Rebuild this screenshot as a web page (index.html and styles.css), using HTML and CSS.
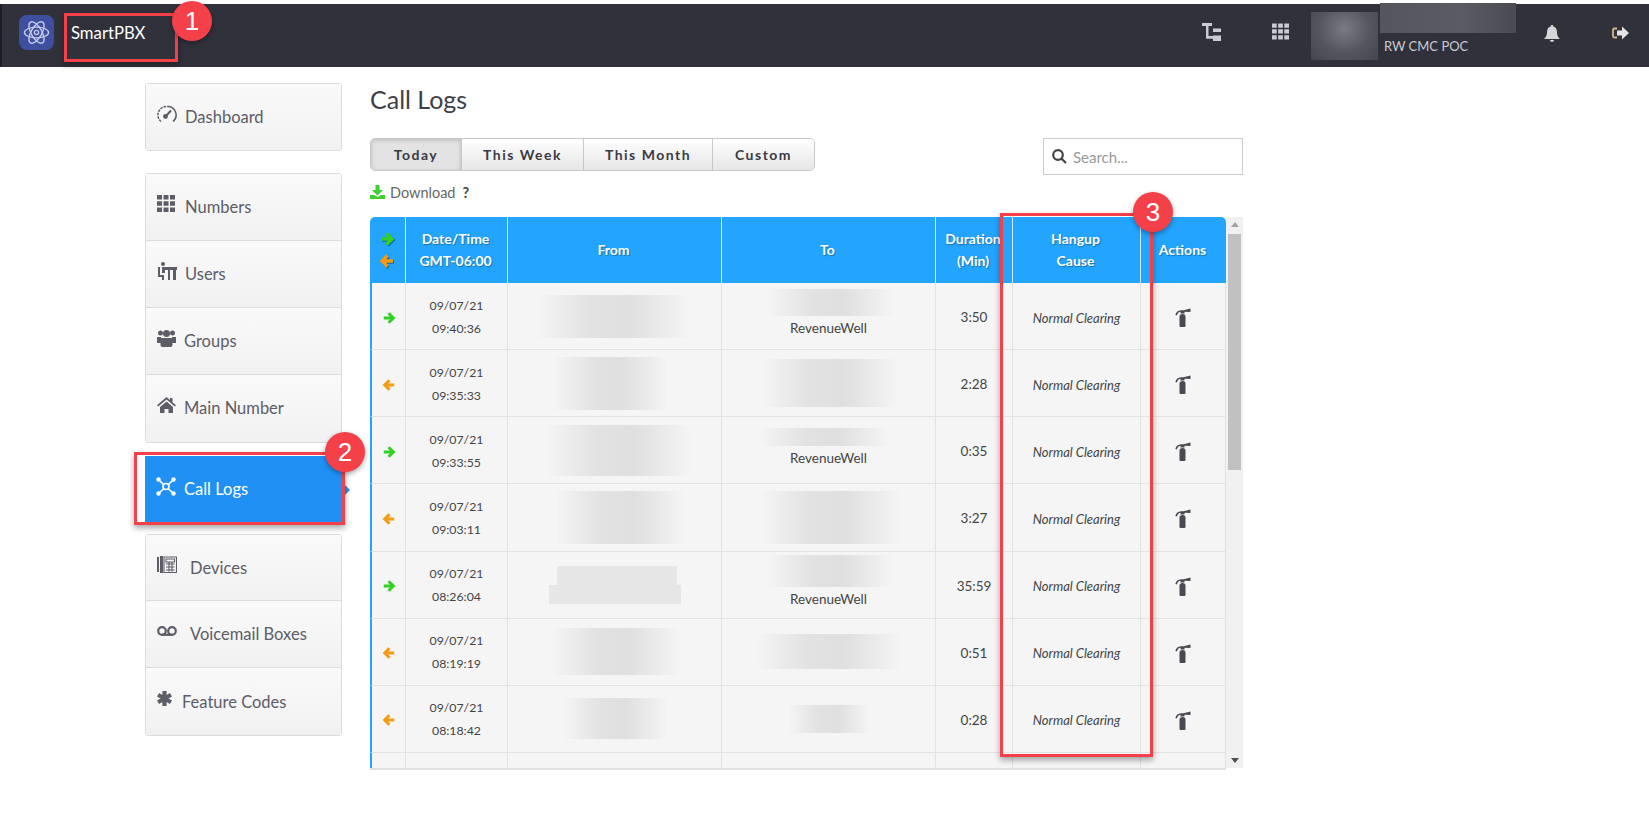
FILE: index.html
```html
<!DOCTYPE html>
<html lang="en">
<head>
    <meta charset="UTF-8">
    <meta name="viewport" content="width=device-width, initial-scale=1.0">
    <title>SmartPBX Call Logs</title>
    <link rel="stylesheet" href="styles.css">
</head>
<body>
    <svg class="defs" width="0" height="0">
        <symbol id="arrow-right" viewBox="0 0 16 16"><path d="M2 8h10M7.500 2.500L13 8l-5.500 5.500" fill="none" stroke="currentColor" stroke-width="3.400"/></symbol>
        <symbol id="arrow-left" viewBox="0 0 16 16"><path d="M14 8H4M8.500 2.500L3 8l5.500 5.500" fill="none" stroke="currentColor" stroke-width="3.400"/></symbol>
        <symbol id="extinguisher" viewBox="0 0 16 19"><path d="M4.500 8.500Q4.500 6 7.500 6Q10.500 6 10.500 8.500V18Q10.500 19 9.500 19H5.500Q4.500 19 4.500 18zM6 2.200h2.500L15.500 0.500V4L9.500 3.800V5.500H5.500V3.800Q3 4 1.800 7.500L0.300 7Q1.500 2.500 6 2.200z" fill="currentColor"/></symbol>
        <symbol id="grid" viewBox="0 0 18 17"><path d="M0 0h5v4.500H0zM6.500 0h5v4.500h-5zM13 0h5v4.500h-5zM0 6.200h5v4.500H0zM6.500 6.200h5v4.500h-5zM13 6.200h5v4.500h-5zM0 12.400h5v4.500H0zM6.500 12.400h5v4.500h-5zM13 12.400h5v4.500h-5z" fill="currentColor"/></symbol>
    </svg>

    <header class="topbar">
        <div class="brand">
            <span class="brand-logo">
                <svg width="27" height="27" viewBox="0 0 28 28" fill="none" stroke="#c6cbe8" stroke-width="1.400">
                    <ellipse cx="14" cy="14" rx="12.500" ry="5.500"/>
                    <ellipse cx="14" cy="14" rx="12.500" ry="5.500" transform="rotate(60 14 14)"/>
                    <ellipse cx="14" cy="14" rx="12.500" ry="5.500" transform="rotate(120 14 14)"/>
                    <circle cx="14" cy="14" r="2.200"/>
                </svg>
            </span>
            <span class="brand-name">SmartPBX</span>
        </div>
        <div class="top-right">
            <svg class="top-icon tree-icon" width="19" height="18" viewBox="0 0 19 18" fill="#c9cbd1"><path d="M0 0h10v3H0zM4 3h2.500v10H12v2.800H4zM11 5.500h8v3.500h-8zM11 12.500h8V18h-8z"/></svg>
            <svg class="top-icon grid-icon" width="17" height="17"><use href="#grid"/></svg>
            <div class="account">
                <div class="blur-avatar"></div>
                <div class="account-info">
                    <div class="blur-name"></div>
                    <div class="account-org">RW CMC POC</div>
                </div>
            </div>
            <svg class="top-icon bell-icon" width="16" height="18" viewBox="0 0 16 18" fill="#d5d6da"><path d="M8 0a1.300 1.300 0 0 1 1.300 1.500C12 2.200 13 4.500 13 7c0 4 1.500 5.500 3 7H0c1.500-1.500 3-3 3-7 0-2.500 1-4.800 3.700-5.500A1.300 1.300 0 0 1 8 0zM6 15h4a2 2 0 0 1-4 0z"/></svg>
            <svg class="top-icon exit-icon" width="17" height="14" viewBox="0 0 17 14"><path d="M5 2.500H2.500Q1 2.500 1 4v6q0 1.500 1.500 1.500H5" fill="none" stroke="#d8b98a" stroke-width="1.800"/><path d="M5 4.500h5V0.500L17 7l-7 6.500V9.500H5z" fill="#e4e4e6"/></svg>
        </div>
    </header>

    <div class="page">
        <nav class="sidebar">
            <div class="nav-group">
                <a class="nav-item">
                    <svg class="nav-icon" width="20" height="18" viewBox="0 0 20 18" fill="none" stroke="currentColor" stroke-width="1.500"><path d="M4 16.500A8.500 8.500 0 0 1 10 1.500" stroke-dasharray="2.500 1"/><path d="M10 1.500A8.500 8.500 0 0 1 16 16.500"/><path d="M8.500 11.500L14 5.500" stroke-width="2"/><circle cx="8.500" cy="11.500" r="1.700" fill="currentColor"/></svg>
                    <span>Dashboard</span>
                </a>
            </div>
            <div class="nav-group">
                <a class="nav-item">
                    <svg class="nav-icon" width="18" height="17"><use href="#grid"/></svg>
                    <span class="nav-label-far">Numbers</span>
                </a>
                <a class="nav-item">
                    <svg class="nav-icon" width="20" height="18" viewBox="0 0 20 18" fill="currentColor"><circle cx="6" cy="2" r="2"/><path d="M1 5h2v8h4v5H5v-3H1zM5 5h15v3h-1v10h-3V8h-3v10h-2V8H8v3H5z"/></svg>
                    <span>Users</span>
                </a>
                <a class="nav-item">
                    <svg class="nav-icon" width="19" height="18" viewBox="0 0 19 18" fill="currentColor"><circle cx="3.500" cy="4" r="2.500"/><circle cx="15.500" cy="4" r="2.500"/><circle cx="9.500" cy="4.500" r="3.500"/><path d="M0 8h4v6H0zM15 8h4v6h-4zM4.500 9h10q1 0 1 1.500V16q0 2-2 2h-8q-2 0-2-2v-5.500Q3.500 9 4.500 9z"/></svg>
                    <span>Groups</span>
                </a>
                <a class="nav-item">
                    <svg class="nav-icon" width="19" height="16" viewBox="0 0 19 16" fill="currentColor"><path d="M9.500 0L13 3V1h2.500v4.200L19 8.300l-1.200 1.200L9.500 2.500 1.200 9.500 0 8.300z"/><path d="M3 10l6.500-5.500L16 10v6h-4.500v-4h-4v4H3z"/></svg>
                    <span>Main Number</span>
                </a>
            </div>
            <div class="nav-group nav-group-active">
                <a class="nav-item nav-item-active">
                    <svg class="nav-icon" width="20" height="19" viewBox="0 0 20 19" fill="none" stroke="currentColor" stroke-width="1.600"><path d="M3 3l5 5M17 3l-5 5M3 16l5-4.500M17 16l-5-4.500"/><circle cx="10" cy="9.500" r="3"/><g fill="currentColor" stroke="none"><circle cx="2.500" cy="2.500" r="2.200"/><circle cx="17.500" cy="2.500" r="2.200"/><circle cx="2.500" cy="16.500" r="2.200"/><circle cx="17.500" cy="16.500" r="2.200"/></g></svg>
                    <span>Call Logs</span>
                </a>
            </div>
            <div class="nav-group">
                <a class="nav-item nav-item-wide">
                    <svg class="nav-icon" width="20" height="17" viewBox="0 0 20 17"><path d="M0 1h2v15H0zM3 0h3v17H3z" fill="currentColor"/><path d="M7 1h12.500v15.500H7zM9 3h8.500v3H9zM9 8h8.500M9 11h8.500M9 14h8.500M12 6.500v9M15 6.500v9" fill="none" stroke="currentColor" stroke-width="1.100"/></svg>
                    <span>Devices</span>
                </a>
                <a class="nav-item nav-item-wide">
                    <svg class="nav-icon" width="20" height="10" viewBox="0 0 20 10" fill="none" stroke="currentColor" stroke-width="2.200"><circle cx="5" cy="5" r="3.800"/><circle cx="15" cy="5" r="3.800"/><path d="M5 8.800h10"/></svg>
                    <span>Voicemail Boxes</span>
                </a>
                <a class="nav-item nav-item-short">
                    <svg class="nav-icon" width="15" height="15" viewBox="0 0 15 15" stroke="currentColor" stroke-width="4.200"><path d="M7.500 0v15M1 3.700l13 7.600M1 11.300l13-7.600"/></svg>
                    <span>Feature Codes</span>
                </a>
            </div>
        </nav>

        <main class="content">
            <h1 class="title">Call Logs</h1>
            <div class="toolbar">
                <div class="tabs">
                    <button class="tab tab-on tab-today">Today</button>
                    <button class="tab tab-week">This Week</button>
                    <button class="tab tab-month">This Month</button>
                    <button class="tab tab-custom">Custom</button>
                </div>
                <div class="search">
                    <svg width="15" height="15" viewBox="0 0 15 15" fill="none" stroke="#444" stroke-width="2.200"><circle cx="6" cy="6" r="4.800"/><path d="M9.500 9.500L14 14"/></svg>
                    <span>Search...</span>
                </div>
            </div>
            <div class="download">
                <svg width="15" height="14" viewBox="0 0 15 14" fill="#3ccf2e"><path d="M5.500 0h4v5H13L7.500 10.500 2 5h3.500zM0 10h4l3.500 2 3.500-2h4v4H0z"/></svg>
                <span>Download</span>
                <b class="help">?</b>
            </div>

            <div class="table-area">
                <div class="table-clip">
                    <table class="logs">
                        <colgroup>
                            <col class="col-dir"><col class="col-date"><col class="col-from"><col class="col-to"><col class="col-dur"><col class="col-cause"><col class="col-act">
                        </colgroup>
                        <thead>
                            <tr>
                                <th>
                                    <svg class="head-arrow green" width="16" height="16"><use href="#arrow-right"/></svg>
                                    <svg class="head-arrow orange" width="16" height="16"><use href="#arrow-left"/></svg>
                                </th>
                                <th>Date/Time<br>GMT-06:00</th>
                                <th>From</th>
                                <th>To</th>
                                <th>Duration<br>(Min)</th>
                                <th>Hangup<br>Cause</th>
                                <th>Actions</th>
                            </tr>
                        </thead>
                        <tbody>
                            <tr>
                                <td><svg class="dir green" width="14" height="14"><use href="#arrow-right"/></svg></td>
                                <td class="date">09/07/21<br>09:40:36</td>
                                <td><div class="blur from-1"></div></td>
                                <td><div class="blur to-1"></div><div class="to-name">RevenueWell</div></td>
                                <td class="dur">3:50</td>
                                <td class="cause">Normal Clearing</td>
                                <td><svg class="ext" width="16" height="19"><use href="#extinguisher"/></svg></td>
                            </tr>
                            <tr>
                                <td><svg class="dir orange" width="14" height="14"><use href="#arrow-left"/></svg></td>
                                <td class="date">09/07/21<br>09:35:33</td>
                                <td><div class="blur from-2"></div></td>
                                <td><div class="blur to-2"></div></td>
                                <td class="dur">2:28</td>
                                <td class="cause">Normal Clearing</td>
                                <td><svg class="ext" width="16" height="19"><use href="#extinguisher"/></svg></td>
                            </tr>
                            <tr>
                                <td><svg class="dir green" width="14" height="14"><use href="#arrow-right"/></svg></td>
                                <td class="date">09/07/21<br>09:33:55</td>
                                <td><div class="blur from-3"></div></td>
                                <td><div class="blur to-3"></div><div class="to-name">RevenueWell</div></td>
                                <td class="dur">0:35</td>
                                <td class="cause">Normal Clearing</td>
                                <td><svg class="ext" width="16" height="19"><use href="#extinguisher"/></svg></td>
                            </tr>
                            <tr>
                                <td><svg class="dir orange" width="14" height="14"><use href="#arrow-left"/></svg></td>
                                <td class="date">09/07/21<br>09:03:11</td>
                                <td><div class="blur from-4"></div></td>
                                <td><div class="blur to-4"></div></td>
                                <td class="dur">3:27</td>
                                <td class="cause">Normal Clearing</td>
                                <td><svg class="ext" width="16" height="19"><use href="#extinguisher"/></svg></td>
                            </tr>
                            <tr>
                                <td><svg class="dir green" width="14" height="14"><use href="#arrow-right"/></svg></td>
                                <td class="date">09/07/21<br>08:26:04</td>
                                <td><div class="blur-bar from-5a"></div><div class="blur-bar from-5b"></div></td>
                                <td><div class="blur to-5"></div><div class="to-name">RevenueWell</div></td>
                                <td class="dur">35:59</td>
                                <td class="cause">Normal Clearing</td>
                                <td><svg class="ext" width="16" height="19"><use href="#extinguisher"/></svg></td>
                            </tr>
                            <tr>
                                <td><svg class="dir orange" width="14" height="14"><use href="#arrow-left"/></svg></td>
                                <td class="date">09/07/21<br>08:19:19</td>
                                <td><div class="blur from-6"></div></td>
                                <td><div class="blur to-6"></div></td>
                                <td class="dur">0:51</td>
                                <td class="cause">Normal Clearing</td>
                                <td><svg class="ext" width="16" height="19"><use href="#extinguisher"/></svg></td>
                            </tr>
                            <tr>
                                <td><svg class="dir orange" width="14" height="14"><use href="#arrow-left"/></svg></td>
                                <td class="date">09/07/21<br>08:18:42</td>
                                <td><div class="blur from-7"></div></td>
                                <td><div class="blur to-7"></div></td>
                                <td class="dur">0:28</td>
                                <td class="cause">Normal Clearing</td>
                                <td><svg class="ext" width="16" height="19"><use href="#extinguisher"/></svg></td>
                            </tr>
                            <tr>
                                <td></td><td></td><td></td><td></td><td></td><td></td><td></td>
                            </tr>
                        </tbody>
                    </table>
                </div>
                <div class="scrollbar">
                    <div class="scroll-up"></div>
                    <div class="scroll-thumb"></div>
                    <div class="scroll-down"></div>
                </div>
            </div>
        </main>
    </div>

    <!-- red callouts drawn over the screenshot -->
    <div class="callout-box box-1"></div>
    <div class="callout-box box-2"></div>
    <div class="callout-box box-3"></div>
    <div class="badge badge-1">1</div>
    <div class="badge badge-2">2</div>
    <div class="badge badge-3">3</div>
</body>
</html>
```

FILE: styles.css
```css
* {
    box-sizing: border-box;
}

body {
    margin: 0;
    padding-top: 4px;
    height: 829px;
    overflow: hidden;
    position: relative;
    background: #fff;
    font-family: Lato, "Noto Sans", sans-serif;
    color: #444;
}

.defs {
    position: absolute;
}

/* top bar */
.topbar {
    height: 63px;
    background: #30313b;
    border-left: 2px solid #1d1d22;
    display: flex;
    justify-content: space-between;
    align-items: flex-start;
}

.brand {
    display: flex;
    align-items: center;
    padding: 11px 0 0 17px;
}

.brand-logo {
    width: 35px;
    height: 35px;
    border-radius: 8px;
    background: #3f4f9f;
    display: flex;
    align-items: center;
    justify-content: center;
}

.brand-name {
    color: #fff;
    font-size: 16.700px;
    margin-left: 17px;
}

.top-right {
    display: flex;
    align-items: flex-start;
}

.top-icon {
    display: block;
    flex: none;
}

.tree-icon {
    margin: 19px 51px 0 0;
}

.grid-icon {
    margin: 19px 22px 0 0;
    color: #c9cbd1;
}

.account {
    display: flex;
    width: 205px;
}

.blur-avatar {
    width: 67px;
    height: 48px;
    margin-top: 8px;
    background: radial-gradient(ellipse at 50% 35%, #7a7a82 0%, #55555d 55%, #45454d 100%);
}

.blur-name {
    width: 136px;
    height: 30px;
    margin: -1px 0 0 2px;
    background: linear-gradient(90deg, #55555e, #5b5b64 60%, #4a4a52);
}

.account-info {
    color: #c9cbd1;
    font-size: 13px;
}

.account-org {
    margin: 5px 0 0 6px;
}

.bell-icon {
    margin: 21px 52px 0 28px;
}

.exit-icon {
    margin: 22px 20px 0 0;
}

/* page columns */
.page {
    display: flex;
    padding-left: 145px;
}

.sidebar {
    width: 197px;
    padding-top: 16px;
    flex: none;
}

.nav-group {
    border: 1px solid #dcdcdc;
    border-radius: 3px;
    margin-bottom: 22px;
}

.nav-group:first-child .nav-item {
    height: 66px;
}

.nav-group-active {
    border: 0;
    margin: -9px 0 11px;
    position: relative;
}

.nav-group-active::after {
    content: "";
    position: absolute;
    right: -8px;
    top: 28px;
    border: 6px solid transparent;
    border-left-color: #2090f5;
    border-right: 0;
}

.nav-item {
    height: 66.900px;
    display: flex;
    align-items: center;
    gap: 8px;
    padding-left: 11px;
    font-size: 16.500px;
    color: #5d5d68;
    background: linear-gradient(#fafafa, #f1f1f1);
    border-bottom: 1px solid #dcdcdc;
}

.nav-item:last-child {
    border-bottom: 0;
}

.nav-icon {
    flex: none;
    margin-top: -6px;
}

.nav-label-far {
    margin-left: 2px;
}

.nav-item-wide {
    gap: 13px;
}

.nav-item-short {
    gap: 10px;
}

.nav-item-active {
    height: 67px;
    color: #fff;
    background: #2090f5;
    border: 0;
}

/* main column */
.content {
    width: 873px;
    margin-left: 28px;
}

.title {
    margin: 15px 0 22px;
    font-size: 25px;
    font-weight: 400;
    line-height: 34px;
    color: #3f3f48;
}

.toolbar {
    display: flex;
    justify-content: space-between;
    align-items: flex-start;
}

.tabs {
    display: flex;
    height: 33px;
    border: 1px solid #c8c8c8;
    border-radius: 5px;
    overflow: hidden;
}

.tab {
    border: 0;
    border-right: 1px solid #c8c8c8;
    background: linear-gradient(#fff, #e6e6e6);
    font-family: inherit;
    font-size: 14px;
    font-weight: 700;
    letter-spacing: 1.500px;
    color: #3a3a44;
    padding: 0;
}

.tab-today {
    width: 91px;
}

.tab-week {
    width: 122px;
}

.tab-month {
    width: 129px;
}

.tab-custom {
    width: 101px;
    border-right: 0;
}

.tab-on {
    background: #e3e3e3;
    box-shadow: inset 0 1px 4px rgba(0, 0, 0, 0.2);
}

.search {
    width: 200px;
    height: 37px;
    border: 1px solid #ccc;
    display: flex;
    align-items: center;
    gap: 6px;
    padding-left: 8px;
    font-size: 15px;
    color: #999;
}

.download {
    display: flex;
    align-items: center;
    gap: 5px;
    height: 20px;
    margin: 7px 0 15px;
    font-size: 14.500px;
    color: #666;
}

.help {
    color: #444;
    margin-left: 2px;
}

/* table */
.table-area {
    display: flex;
    height: 553px;
}

.table-clip {
    width: 856px;
    height: 553px;
    overflow: hidden;
    border-bottom: 2px solid #e0e0e0;
}

.logs {
    width: 856px;
    table-layout: fixed;
    border-collapse: separate;
    border-spacing: 0;
    font-size: 13.500px;
    color: #444;
}

.col-dir { width: 36px; }
.col-date { width: 102px; }
.col-from { width: 214px; }
.col-to { width: 214px; }
.col-dur { width: 77px; }
.col-cause { width: 128px; }
.col-act { width: 85px; }

.logs th {
    height: 66px;
    padding: 0 2px 0 0;
    background: #22a4ff;
    color: #fff;
    font-size: 14px;
    line-height: 22px;
    font-weight: 700;
    text-shadow: 1px 1px 1px rgba(0, 0, 0, 0.3);
    border-right: 1px solid #d5edff;
}

.logs th:first-child {
    border-top-left-radius: 5px;
}

.logs th:last-child {
    border-top-right-radius: 5px;
    border-right: 0;
}

.logs td {
    height: 67.140px;
    padding: 0;
    background: #f5f5f5;
    text-align: center;
    vertical-align: middle;
    line-height: 22px;
    border-right: 1px solid #e2e2e2;
    border-bottom: 1.500px solid #e2e2e2;
}

.logs td:first-child {
    border-left: 2px solid #22a4ff;
}

.logs td.date {
    font-size: 12.300px;
    line-height: 23px;
    padding-top: 1px;
}

.logs td.dur {
    padding-top: 2px;
}

.logs td.cause {
    font-style: italic;
    font-size: 13px;
    padding-top: 3px;
}

.head-arrow {
    display: block;
    margin: 6px auto;
    filter: drop-shadow(1px 1px 0 rgba(0, 0, 0, 0.35));
}

.dir {
    display: block;
    margin: 3px auto 0;
}

.green {
    color: #35cf25;
}

.orange {
    color: #f79a14;
}

.ext {
    display: block;
    margin: 3px auto 0;
    color: #4a4a52;
}

.to-name {
    margin: 1px 0 4px;
}

/* blurred phone numbers */
.blur,
.blur-bar {
    margin-left: auto;
    margin-right: auto;
}

.blur {
    background: linear-gradient(90deg, #f4f4f4, #e2e2e2 35%, #dfdfdf 60%, #f4f4f4);
}

.blur-bar {
    background: #e6e6e6;
}

.from-1 { width: 150px; height: 43px; transform: translateX(-2px); }
.from-2 { width: 112px; height: 53px; transform: translateX(-4px); }
.from-3 { width: 142px; height: 51px; transform: translateX(4px); }
.from-4 { width: 127px; height: 53px; transform: translateX(6px); }
.from-5a { width: 120px; height: 19px; transform: translateX(2px); }
.from-5b { width: 132px; height: 19px; }
.from-6 { width: 126px; height: 47px; transform: translateX(1px); }
.from-7 { width: 103px; height: 41px; transform: translateX(1px); }
.to-1 { width: 123px; height: 27px; transform: translateX(2px); }
.to-2 { width: 134px; height: 48px; transform: translateX(1px); }
.to-3 { width: 127px; height: 18px; transform: translateX(-4px); }
.to-4 { width: 137px; height: 53px; transform: translateX(2px); }
.to-5 { width: 124px; height: 32px; transform: translateX(1px); }
.to-6 { width: 142px; height: 35px; }
.to-7 { width: 79px; height: 28px; transform: translateX(1px); }

.scrollbar {
    width: 17px;
    height: 551px;
    background: #f1f1f1;
    display: flex;
    flex-direction: column;
    align-items: center;
    position: relative;
}

.scroll-up,
.scroll-down {
    position: absolute;
    border: 4px solid transparent;
}

.scroll-up {
    top: 5px;
    border-bottom: 5px solid #a3a3a3;
    border-top: 0;
}

.scroll-down {
    bottom: 5px;
    border-top: 5px solid #505050;
    border-bottom: 0;
}

.scroll-thumb {
    width: 13px;
    height: 236px;
    margin-top: 17px;
    background: #c1c1c1;
}

/* callouts */
.callout-box {
    position: absolute;
    border: 3px solid #f44048;
    box-shadow: 0 3px 6px rgba(0, 0, 0, 0.35);
}

.box-1 {
    left: 64px;
    top: 13px;
    width: 114px;
    height: 49px;
}

.box-2 {
    left: 134px;
    top: 452px;
    width: 211px;
    height: 73px;
}

.box-3 {
    left: 1000px;
    top: 213px;
    width: 153px;
    height: 544px;
}

.badge {
    position: absolute;
    width: 40px;
    height: 40px;
    border-radius: 50%;
    background: #f44048;
    color: #fff;
    font-family: "Liberation Sans", sans-serif;
    font-size: 26px;
    line-height: 40px;
    text-align: center;
    box-shadow: 0 2px 5px rgba(0, 0, 0, 0.35);
}

.badge-1 {
    left: 172px;
    top: 1px;
}

.badge-2 {
    left: 325px;
    top: 432px;
}

.badge-3 {
    left: 1133px;
    top: 192px;
}
```
